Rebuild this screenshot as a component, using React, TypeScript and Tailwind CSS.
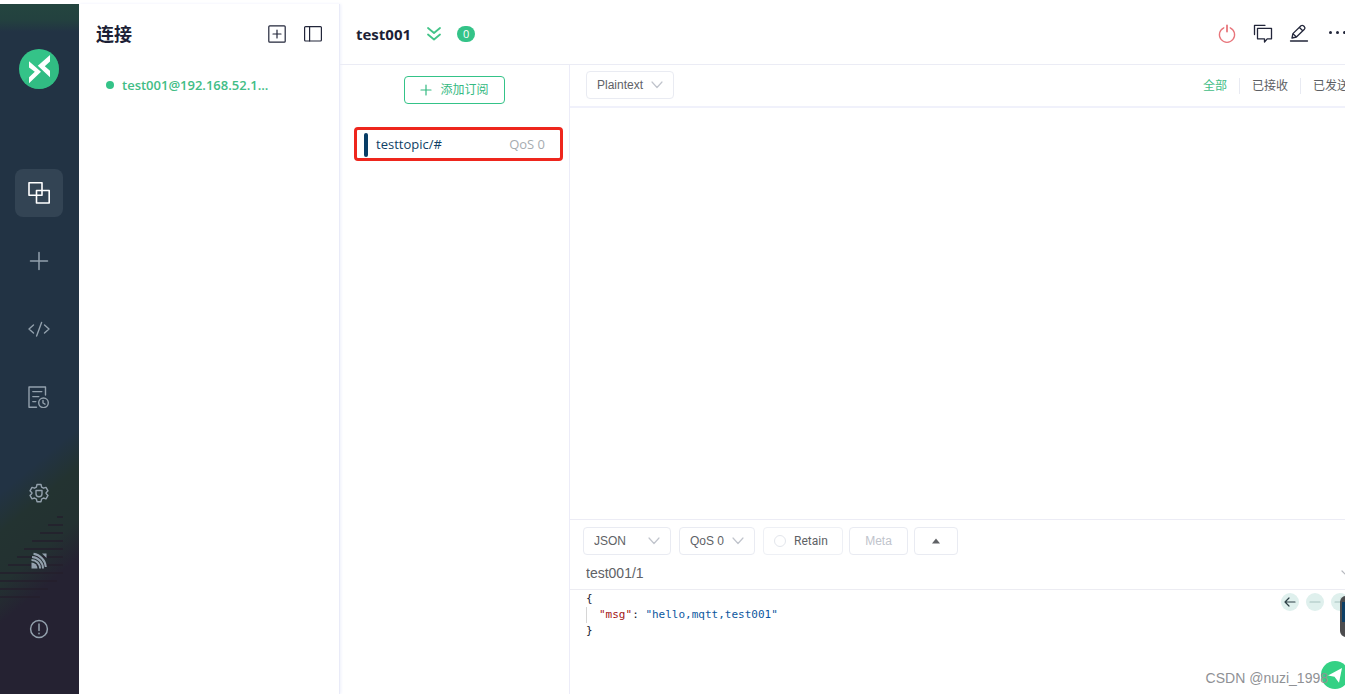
import type { ReactNode } from "react";

const stroke = {
  fill: "none",
  stroke: "currentColor",
  strokeLinecap: "round" as const,
  strokeLinejoin: "round" as const,
};

function Logo() {
  return (
    <svg viewBox="0 0 40 40" className="relative h-10 w-10" role="img" aria-label="MQTTX">
      <circle cx="20" cy="20" r="20" fill="#34c388" />
      <path d="M4.500 32.600A20 20 0 0 0 40 20A20 20 0 0 0 34 5.800Z" fill="#2fae7a" opacity="0.350" />
      <path d="M10 12.200 22 22.800 10 34.200v-6l5.800-5.400L10 18.400z" fill="#fff" />
      <path d="M31 6 18.800 16.800 31 28.200v-6.400l-5.200-4.600L31 12.600z" fill="#fff" />
    </svg>
  );
}

function ConnectionsIcon() {
  return (
    <svg viewBox="0 0 22 22" className="h-[22px] w-[22px]" {...stroke} strokeWidth="1.600">
      <rect x="1" y="0.800" width="13" height="12.400" />
      <rect x="8.500" y="8.500" width="12.700" height="12.500" />
    </svg>
  );
}

function PlusIcon() {
  return (
    <svg viewBox="0 0 20 20" className="h-5 w-5" {...stroke} strokeWidth="1.500">
      <path d="M10 1.500v17M1.500 10h17" />
    </svg>
  );
}

function CodeIcon() {
  return (
    <svg viewBox="0 0 22 20" className="h-5 w-[22px]" {...stroke} strokeWidth="1.400">
      <path d="M5.500 6 1 10l4.500 4M16.500 6l4.500 4-4.500 4M13.600 3.500 8.600 17" />
    </svg>
  );
}

function LogIcon() {
  return (
    <svg viewBox="0 0 22 22" className="h-[22px] w-[22px]" {...stroke} strokeWidth="1.400">
      <path d="M17.500 9V1H1v20.300h7.500M4.800 5.600h9M4.800 10.600h6M4.800 15.600h3" />
      <circle cx="15.500" cy="16.800" r="4.800" />
      <path d="M15 14.500v2.500l2 1.200" />
    </svg>
  );
}

function GearIcon() {
  return (
    <svg viewBox="0 0 20 20" className="h-5 w-5" {...stroke} strokeWidth="1.400">
      <path d="M8 1.500h4l.6 2.600 1.900 1.100 2.500-.8 2 3.400-1.900 1.900v.8l1.900 1.900-2 3.400-2.500-.8-1.900 1.100-.6 2.600H8l-.6-2.600-1.900-1.100-2.500.8-2-3.400 1.900-1.900v-.8L1 7.800l2-3.400 2.500.8 1.900-1.100z" />
      <path d="M7 7.500h6v3.200a3 3 0 0 1-6 0z" />
    </svg>
  );
}

function FeedIcon() {
  return (
    <svg viewBox="0 0 18 18" className="h-[18px] w-[18px]" fill="none" stroke="currentColor">
      <path d="M1.500 10.500a6 6 0 0 1 6 6h-6z" fill="currentColor" stroke="none" />
      <path d="M1.500 8a8.500 8.500 0 0 1 8.600 8.500M2 5a11.500 11.500 0 0 1 11 11.500M3.500 1.800a14.500 14.500 0 0 1 12.300 13.200" strokeWidth="2" />
      <path d="M12 1.500h4.500V6z" fill="currentColor" stroke="none" />
    </svg>
  );
}

function InfoIcon() {
  return (
    <svg viewBox="0 0 20 20" className="h-5 w-5" {...stroke} strokeWidth="1.500">
      <circle cx="10" cy="10" r="8.400" />
      <path d="M10 5v6.500M10 14.300v.4" />
    </svg>
  );
}

function Chevron() {
  return (
    <svg viewBox="0 0 12 8" className="pointer-events-none absolute right-[11px] top-[10px] h-2 w-3 text-[#c0c4cc]" {...stroke} strokeWidth="1.200">
      <path d="M1 1l5 5.500L11 1" />
    </svg>
  );
}

function NavButton({ label, active, children }: { label: string; active?: boolean; children: ReactNode }) {
  return (
    <button
      type="button"
      aria-label={label}
      className={
        active
          ? "flex h-12 w-12 items-center justify-center rounded-lg bg-[#334454] text-white"
          : "flex h-12 w-12 items-center justify-center rounded-lg text-[#93a1ad]"
      }
    >
      {children}
    </button>
  );
}

function Hatching() {
  const rows = [
    [57, 63], [48, 63], [40, 63], [32, 63], [24, 63], [17, 63],
    [8, 63], [0, 63], [0, 57], [0, 48], [0, 40],
  ];
  return (
    <svg viewBox="0 0 79 90" className="absolute bottom-[92px] left-0 h-[90px] w-[79px]" stroke="#241f2d" strokeWidth="1.500" aria-hidden="true">
      {rows.map(([a, b], i) => (
        <path key={i} d={`M${a} ${5 + i * 8}H${b}`} />
      ))}
    </svg>
  );
}

function Sidebar() {
  return (
    <nav className="relative flex w-[79px] shrink-0 flex-col items-center bg-[linear-gradient(180deg,#24453f_0px,#23413f_16px,transparent_28px),linear-gradient(140deg,#223344_0px,#223344_375px,#233331_405px,#233131_445px,#252232_475px)] pb-[41px] pr-px pt-[45px]">
      <Hatching />
      <Logo />
      <div className="relative mt-20 flex flex-col gap-5">
        <NavButton label="Connections" active><ConnectionsIcon /></NavButton>
        <NavButton label="New connection"><PlusIcon /></NavButton>
        <NavButton label="Script"><CodeIcon /></NavButton>
        <NavButton label="Log"><LogIcon /></NavButton>
      </div>
      <div className="relative mt-auto flex flex-col gap-5">
        <NavButton label="Settings"><GearIcon /></NavButton>
        <NavButton label="Feed"><FeedIcon /></NavButton>
        <NavButton label="About"><InfoIcon /></NavButton>
      </div>
    </nav>
  );
}

function ConnectionList() {
  return (
    <aside className="w-[261px] shrink-0 border-r border-[#e9ebf8] px-[17px] shadow-[1px_0_3px_#eef0fb]">
      <div className="flex h-[59px] items-center">
        <h1 className="text-lg font-bold text-[#1c1f36]">连接</h1>
        <div className="ml-auto flex gap-[18px] text-[#22263a]">
          <button type="button" aria-label="New">
            <svg viewBox="0 0 18 18" className="h-[18px] w-[18px]" {...stroke} strokeWidth="1.200">
              <rect x="0.800" y="0.800" width="16.400" height="16.400" rx="1" />
              <path d="M9 5v8M5 9h8" />
            </svg>
          </button>
          <button type="button" aria-label="Toggle list">
            <svg viewBox="0 0 18 18" className="h-[18px] w-[18px]" {...stroke} strokeWidth="1.200">
              <rect x="0.600" y="1.600" width="16.800" height="14.400" rx="1" />
              <path d="M5.600 2v14" />
            </svg>
          </button>
        </div>
      </div>
      <a href="#test001" className="mt-3 flex items-center gap-2 pl-[10px] text-[13px] font-semibold leading-5 text-[#42bd86]">
        <span className="h-2 w-2 rounded-full bg-[#34c388]" />
        test001@192.168.52.1...
      </a>
    </aside>
  );
}

function Header() {
  return (
    <header className="flex h-[61px] shrink-0 items-center border-b border-[#ebecf5] px-4">
      <h2 className="text-[15px] font-bold text-[#1c1f36]">test001</h2>
      <button type="button" aria-label="Expand" className="ml-4 text-[#42c488]">
        <svg viewBox="0 0 14 14" className="h-[14px] w-[14px]" {...stroke} strokeWidth="1.800">
          <path d="M1 1l6 5 6-5M1 7.500l6 5 6-5" />
        </svg>
      </button>
      <span className="ml-4 flex h-4 w-[18px] items-center justify-center rounded-full bg-[#34c388] text-[11px] text-white">0</span>
      <div className="ml-auto flex items-center gap-4 text-[#22263a]">
        <button type="button" aria-label="Disconnect" className="text-[#e8757b]">
          <svg viewBox="0 0 20 20" className="h-5 w-5" {...stroke} strokeWidth="1.300">
            <path d="M6.800 3.800a7.600 7.600 0 1 0 6.400 0" />
            <path d="M10 1.500v6" strokeWidth="1.800" />
          </svg>
        </button>
        <button type="button" aria-label="Messages">
          <svg viewBox="0 0 20 20" className="h-5 w-5" {...stroke} strokeWidth="1.300">
            <path d="M4.500 4.300h14v10.500h-4.300L11.500 18v-3.200h-7z" />
            <path d="M1.500 10.500V1.300h10.500" />
          </svg>
        </button>
        <button type="button" aria-label="Edit">
          <svg viewBox="0 0 20 20" className="h-5 w-5" {...stroke} strokeWidth="1.300">
            <path d="M3 14l.9-4.400L12 1.800q1.200-1 2.400 0l1 1q1 1.200 0 2.400L7.400 13z M10.500 3.500l3.200 3.200M3.900 9.600 7.400 13M1.500 17h17" />
          </svg>
        </button>
        <button type="button" aria-label="More" className="ml-1">
          <svg viewBox="0 0 20 20" className="h-5 w-5" fill="currentColor">
            <circle cx="1.500" cy="8.500" r="1.500" />
            <circle cx="8.500" cy="8.500" r="1.500" />
            <circle cx="15.500" cy="8.500" r="1.500" />
          </svg>
        </button>
      </div>
    </header>
  );
}

function Subscriptions() {
  return (
    <section className="w-[230px] shrink-0 border-r border-[#ececf8] pt-[11px]">
      <button type="button" className="mx-auto flex h-7 w-[101px] items-center justify-center gap-2 rounded border border-[#34c388] text-xs text-[#34b981]">
        <svg viewBox="0 0 12 12" className="h-3 w-3" {...stroke} strokeWidth="1.200">
          <path d="M6 1v10M1 6h10" />
        </svg>
        添加订阅
      </button>
      <div className="ml-[14px] mr-[6px] mt-[23px] flex h-[34px] items-center rounded border-[3px] border-[#ee261d] pl-[7px] pr-[15px] pt-[2px] text-[13px]">
        <span className="h-6 w-1 rounded-sm bg-[#083d66]" />
        <span className="ml-2 text-[#0f3f66]">testtopic/#</span>
        <span className="ml-auto text-[#a6acb0]">QoS 0</span>
      </div>
    </section>
  );
}

function Picker({ label, value, width }: { label: string; value: string; width: string }) {
  return (
    <div className={`relative h-7 ${width}`}>
      <select aria-label={label} className="block h-full w-full appearance-none rounded border border-[#e9ebf2] bg-white px-[10px] font-['Liberation_Sans',sans-serif] text-xs leading-4 text-[#606266]">
        <option>{value}</option>
      </select>
      <Chevron />
    </div>
  );
}

function Filters() {
  return (
    <div className="flex h-[43px] shrink-0 items-center border-b-2 border-[#f0f1fb] px-4 pb-px">
      <Picker label="Format" value="Plaintext" width="w-[88px]" />
      <div className="ml-auto flex divide-x divide-[#e8eaf2] pt-[2px] text-xs leading-4 text-[#5c5e63]">
        <button type="button" className="pr-3 text-[#42bd86]">全部</button>
        <button type="button" className="px-3">已接收</button>
        <button type="button" className="pl-3">已发送</button>
      </div>
    </div>
  );
}

function RoundButton({ label, className, path }: { label: string; className: string; path: string }) {
  return (
    <button type="button" aria-label={label} className={`flex h-[18px] w-[18px] items-center justify-center rounded-full bg-[#dff0ed] ${className}`}>
      <svg viewBox="0 0 12 12" className="h-3 w-3" {...stroke} strokeWidth="1.200">
        <path d={path} />
      </svg>
    </button>
  );
}

function Composer() {
  return (
    <section className="relative flex h-[175px] shrink-0 flex-col border-t border-[#ececf5]">
      <div className="flex items-center pl-[13px] pt-[7px] text-xs text-[#606266]">
        <Picker label="Payload" value="JSON" width="w-[88px]" />
        <div className="ml-2"><Picker label="QoS" value="QoS 0" width="w-[76px]" /></div>
        <label className="ml-2 flex h-7 w-20 items-center gap-2 rounded border border-[#eef0f5] pl-[10px]">
          <input type="radio" className="h-3 w-3 appearance-none rounded-full border border-[#e3e6ec]" />
          <span className="font-[Roboto,sans-serif]">Retain</span>
        </label>
        <button type="button" className="ml-[6px] h-7 w-[59px] rounded border border-[#e9ebf2] font-['Liberation_Sans',sans-serif] text-[#c0c4cc]">Meta</button>
        <button type="button" aria-label="Collapse" className="ml-[6px] flex h-7 w-11 items-center justify-center rounded border border-[#e9ebf2]">
          <svg viewBox="0 0 8 6" className="h-[6px] w-2" fill="currentColor"><path d="M0 5.500 4 .5l4 5z" /></svg>
        </button>
      </div>
      <div className="relative flex h-[35px] items-center border-b border-[#ececf2] pl-4 pt-[2px]">
        <input aria-label="Topic" defaultValue="test001/1" className="w-full font-['Liberation_Sans',sans-serif] text-sm text-[#606266] outline-none" />
        <svg viewBox="0 0 10 8" className="absolute right-[14px] top-[15px] h-2 w-[10px] text-[#b5b8be]" {...stroke} strokeWidth="1.200">
          <path d="M1 1l4 4 4-4" />
        </svg>
      </div>
      <div className="flex items-start justify-between px-4">
        <div role="textbox" aria-label="Message" className="pt-px font-['DejaVu_Sans_Mono',monospace] text-[11px] leading-4 text-[#1b1b2f]">
          <div>{"{"}</div>
          <div className="whitespace-pre border-l border-[#d6d6d6] pl-[12px]">
            <span className="text-[#a31515]">"msg"</span>: <span className="text-[#0b57a0]">"hello,mqtt,test001"</span>
          </div>
          <div>{"}"}</div>
        </div>
        <div className="flex gap-[7px] pt-[3px]">
          <RoundButton label="Previous" className="text-[#2d3f46]" path="M11 6H1M5 2 1 6l4 4" />
          <RoundButton label="Remove" className="text-[#a8c2bf]" path="M1 6h10" />
          <RoundButton label="Next" className="text-[#a8c2bf]" path="M1 6h10M7 2l4 4-4 4" />
        </div>
      </div>
      <button type="button" aria-label="Send" className="absolute bottom-[5px] right-4 flex h-7 w-7 items-center justify-center rounded-full bg-[#34d184] text-white">
        <svg viewBox="0 0 16 16" className="h-4 w-4" fill="currentColor">
          <path d="M15 1 1 8.500l6.500 1.200 4.500 6z" />
        </svg>
      </button>
      <div className="absolute right-0 top-[76px] h-[41px] w-[25px] rounded-l-md border-2 border-[#4c4c4e] bg-[linear-gradient(#4c4c4e_4px,#0d3f66_4px,#0d3f66_24px,#4c4c4e_24px)]" />
      <p className="absolute bottom-[6px] right-[37px] font-['Liberation_Sans',sans-serif] text-sm leading-5 text-[#8f9195]">CSDN @nuzi_1998</p>
    </section>
  );
}

export default function App() {
  return (
    <div className="flex min-h-screen overflow-hidden bg-white pt-1 font-['Open_Sans','Noto_Sans_CJK_SC',sans-serif]">
      <Sidebar />
      <ConnectionList />
      <main className="-mr-5 flex min-w-0 flex-1 flex-col">
        <Header />
        <div className="flex flex-1">
          <Subscriptions />
          <div className="flex min-w-0 flex-1 flex-col">
            <Filters />
            <div className="flex-1" />
            <Composer />
          </div>
        </div>
      </main>
    </div>
  );
}
